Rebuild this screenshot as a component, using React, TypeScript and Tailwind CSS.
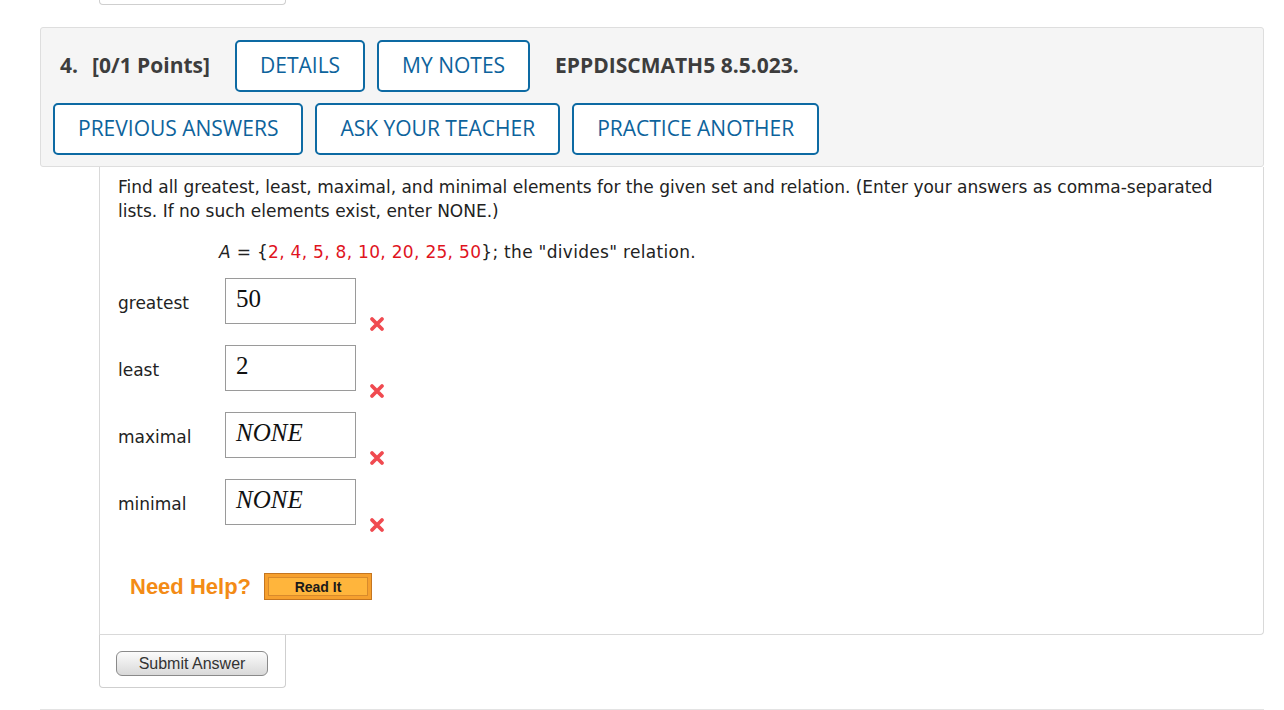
import React from "react";

const rows = [
  { label: "greatest", value: "50", italic: false },
  { label: "least", value: "2", italic: false },
  { label: "maximal", value: "NONE", italic: true },
  { label: "minimal", value: "NONE", italic: true },
];

function WrongMark() {
  return (
    <svg width="16" height="16" viewBox="0 0 16 16" className="shrink-0">
      <path
        d="M3 3 L13 13 M13 3 L3 13"
        stroke="#f04a50"
        strokeWidth="3.8"
        strokeLinecap="round"
        fill="none"
      />
    </svg>
  );
}

function BlueButton({ children }: { children: React.ReactNode }) {
  return (
    <button className="flex h-[52px] items-center rounded-[5px] border-2 border-[#0d6aa3] bg-white px-[23px] text-[21px] font-medium text-[#0d639c]">
      {children}
    </button>
  );
}

export default function App() {
  return (
    <div className="relative h-[710px] w-[1284px] overflow-hidden bg-white font-['Open_Sans',sans-serif]">
      {/* tail of previous question's submit box */}
      <div className="ml-[99px] h-[5px] w-[187px] rounded-b-[4px] border border-t-0 border-[#cfcfcf]" />

      {/* header */}
      <div className="ml-[40px] mt-[22px] h-[140px] w-[1224px] rounded-[3px] border border-[#dedede] bg-[#f5f5f5]">
        <div className="mt-[12px] flex items-center pl-[19px]">
          <span className="text-[21px] font-bold text-[#3d3d3d]">4.</span>
          <span className="ml-[14px] text-[21px] font-bold text-[#3d3d3d]">[0/1 Points]</span>
          <div className="ml-[25px] flex gap-[12px]">
            <BlueButton>DETAILS</BlueButton>
            <BlueButton>MY NOTES</BlueButton>
          </div>
          <span className="ml-[25px] text-[21px] font-bold text-[#3d3d3d]">EPPDISCMATH5 8.5.023.</span>
        </div>
        <div className="mt-[11px] flex gap-[12px] pl-[12px]">
          <BlueButton>PREVIOUS ANSWERS</BlueButton>
          <BlueButton>ASK YOUR TEACHER</BlueButton>
          <BlueButton>PRACTICE ANOTHER</BlueButton>
        </div>
      </div>

      {/* question body */}
      <div className="ml-[99px] h-[468px] w-[1165px] rounded-br-[4px] border border-t-0 border-[#d9d9d9] pl-[18px] pr-[20px] pt-[8px] font-['DejaVu_Sans',sans-serif] text-[17px] leading-[24px] text-[#222]">
        <p className="w-[1116px]">
          Find all greatest, least, maximal, and minimal elements for the given set and relation. (Enter your answers as comma-separated lists. If no such elements exist, enter NONE.)
        </p>
        <p className="ml-[101px] mt-[17px] tracking-[0.3px]">
          <i>A</i> = {"{"}
          <span className="text-[#e0141e]">2, 4, 5, 8, 10, 20, 25, 50</span>
          {"}"}; the "divides" relation.
        </p>

        <div className="mt-[14px] flex flex-col gap-[13px]">
          {rows.map((r) => (
            <div key={r.label} className="flex items-start">
              <span className="mt-[13px] w-[107px]">{r.label}</span>
              <div
                className={`flex h-[46px] w-[131px] items-center border border-[#9a9a9a] pb-[4px] pl-[10px] font-['Liberation_Serif',serif] text-[25px] text-[#111] ${
                  r.italic ? "italic" : ""
                }`}
              >
                {r.value}
              </div>
              <div className="ml-[13px] mt-[38px]">
                <WrongMark />
              </div>
            </div>
          ))}
        </div>

        <div className="mt-[40px] flex items-center pl-[12px]">
          <span className="font-['Liberation_Sans',sans-serif] text-[22px] font-bold text-[#f38b16]">Need Help?</span>
          <div className="ml-[13px] h-[27px] w-[108px] border border-[#c57620] bg-[#f6a02e] p-[3px]">
            <div className="flex h-full items-center justify-center border border-[#d88a2c] bg-[#ffb53c] font-['Liberation_Sans',sans-serif] text-[14px] font-bold leading-none text-[#1a1a1a]">
              Read It
            </div>
          </div>
        </div>
      </div>

      {/* submit area */}
      <div className="ml-[99px] h-[53px] w-[187px] rounded-b-[4px] border border-t-0 border-[#cfcfcf] pl-[16px] pt-[16px]">
        <button className="flex h-[25px] w-[152px] items-center justify-center rounded-[6px] border border-[#8a8a8a] bg-gradient-to-b from-[#fbfbfb] to-[#d9d9d9] font-['Liberation_Sans',sans-serif] text-[16px] text-[#333]">
          Submit Answer
        </button>
      </div>

      <div className="ml-[40px] mt-[21px] h-px w-[1224px] bg-[#e3e3e3]" />
    </div>
  );
}
